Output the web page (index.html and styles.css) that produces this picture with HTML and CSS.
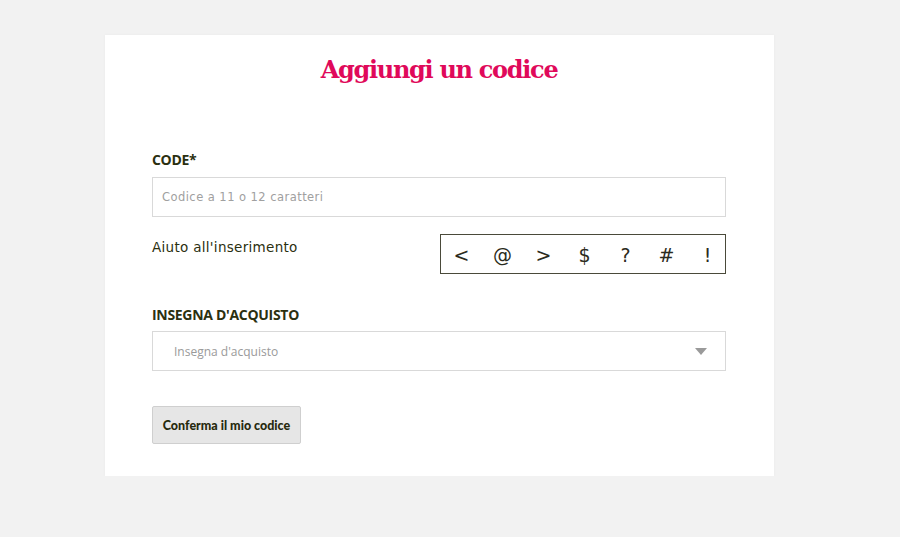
FILE: index.html
```html
<!DOCTYPE html>
<html lang="it">
<head>
<meta charset="utf-8">
<title>Aggiungi un codice</title>
<link rel="stylesheet" href="styles.css">
</head>
<body>
<div class="card">
  <h1 class="title">Aggiungi un codice</h1>
  <div class="field">
    <label class="label">CODE*</label>
    <div class="input"><span class="placeholder">Codice a 11 o 12 caratteri</span></div>
  </div>
  <div class="help-row">
    <span class="help-text">Aiuto all'inserimento</span>
    <div class="chars">
      <span>&lt;</span><span>@</span><span>&gt;</span><span>$</span><span>?</span><span>#</span><span>!</span>
    </div>
  </div>
  <div class="field field-select">
    <label class="label">INSEGNA D'ACQUISTO</label>
    <div class="select">
      <span class="select-text">Insegna d'acquisto</span>
      <svg class="arrow" width="12" height="7" viewBox="0 0 12 7"><path d="M0 0 L12 0 L6 7 Z" fill="#9a9a9a"/></svg>
    </div>
  </div>
  <button class="btn">Conferma il mio codice</button>
</div>
</body>
</html>
```
FILE: styles.css
```css
html, body {
  margin: 0;
  padding: 0;
  background: #f2f2f2;
}
body {
  font-family: "Open Sans", "Liberation Sans", sans-serif;
  color: #2b3010;
}
.card {
  box-sizing: border-box;
  margin: 35px 0 0 105px;
  width: 669px;
  height: 441px;
  background: #fff;
  padding: 19px 48px 0 47px;
  box-shadow: 0 0 3px rgba(0,0,0,0.04);
}
.title {
  margin: 0;
  text-align: center;
  font-family: "DejaVu Serif", "Liberation Serif", serif;
  font-weight: bold;
  font-size: 24px;
  line-height: 32px;
  color: #e0095a;
  letter-spacing: -1.3px;
}
.field {
  margin-top: 64px;
}
.label {
  display: block;
  font-family: "Open Sans", sans-serif;
  font-weight: 700;
  font-size: 14px;
  line-height: 20px;
  letter-spacing: -0.3px;
  color: #2b3010;
}
.input, .select {
  box-sizing: border-box;
  margin-top: 7px;
  height: 40px;
  border: 1px solid #d9d9d9;
  display: flex;
  align-items: center;
}
.placeholder {
  padding-left: 9px;
  font-family: "DejaVu Sans", sans-serif;
  font-size: 11.5px;
  letter-spacing: 0.45px;
  color: #a0a0a0;
}
.help-row {
  margin-top: 17px;
  display: flex;
  justify-content: space-between;
  align-items: flex-start;
}
.help-text {
  padding-top: 5px;
  font-family: "DejaVu Sans", sans-serif;
  font-size: 13.5px;
  letter-spacing: 0.3px;
  color: #2b3010;
}
.chars {
  box-sizing: border-box;
  width: 286px;
  height: 40px;
  border: 1.5px solid #4a4a3a;
  display: flex;
  align-items: center;
  padding: 2px 0 0 0;
}
.chars span {
  flex: none;
  width: 41px;
  text-align: center;
  font-family: "DejaVu Sans", sans-serif;
  font-size: 19px;
  color: #2b2b20;
}
.field-select {
  margin-top: 31px;
}
.select {
  margin-top: 6px;
  justify-content: space-between;
  padding: 0 18px 0 21px;
}
.select-text {
  font-family: "Open Sans", sans-serif;
  font-size: 12px;
  color: #9a9a9a;
}
.btn {
  margin-top: 35px;
  box-sizing: border-box;
  width: 149px;
  height: 38px;
  background: #e6e6e6;
  border: 1px solid #cfcfcf;
  border-radius: 2px;
  font-family: "Lato", sans-serif;
  font-weight: 900;
  font-size: 12.5px;
  color: #262a0e;
  padding: 0;
  letter-spacing: 0;
}
```
